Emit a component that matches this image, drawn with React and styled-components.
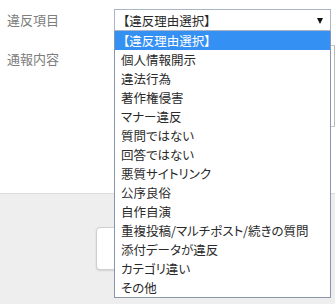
import React from "react";
import styled, { createGlobalStyle } from "styled-components";

const GlobalStyle = createGlobalStyle`
  body {
    margin: 0;
    background: #fff;
    font-family: "Noto Sans CJK JP", "Noto Sans", sans-serif;
    overflow: hidden;
  }
`;

const Page = styled.div`
  position: relative;
  width: 335px;
  height: 304px;
  overflow: hidden;
`;

const Form = styled.div`
  height: 193px;
  padding-top: 9px;
  box-sizing: border-box;
  display: flex;
  flex-direction: column;
  gap: 14px;
`;

const Row = styled.div`
  display: grid;
  grid-template-columns: 114px 1fr;
  align-items: start;
`;

const Label = styled.div`
  padding-left: 7px;
  padding-top: ${(p) => p.$top || 0}px;
  font-size: 13px;
  line-height: 22px;
  color: #7d7d7d;
`;

const SelectBox = styled.div`
  position: relative;
  width: 217px;
  height: 22px;
  box-sizing: border-box;
  border: 1px solid #a9b4c6;
  display: flex;
  align-items: center;
  padding-left: 8px;
  font-size: 12.5px;
  color: #2a2a2a;
  font-feature-settings: "palt";
`;

const Arrow = styled.span`
  position: absolute;
  right: 7px;
  top: 8px;
  width: 0;
  height: 0;
  border-left: 3.5px solid transparent;
  border-right: 3.5px solid transparent;
  border-top: 6px solid #111;
`;

const TextArea = styled.div`
  width: 221px;
  height: 82px;
  box-sizing: border-box;
  border: 1px solid #c9c9c9;
  border-right-color: #b9b9b9;
`;

const Footer = styled.div`
  height: 111px;
  background: #eeeeee;
  border-top: 1px solid #dcdcdc;
  box-sizing: border-box;
  padding: 33px 0 0 96px;
`;

const CardButton = styled.div`
  width: 143px;
  height: 43px;
  box-sizing: border-box;
  background: #fff;
  border: 1px solid #cfcfcf;
  border-radius: 4px;
  box-shadow: 0 1px 2px rgba(0, 0, 0, 0.12);
`;

const List = styled.ul`
  position: absolute;
  left: 114px;
  top: 31px;
  width: 217px;
  margin: 0;
  padding: 0;
  list-style: none;
  box-sizing: border-box;
  border: 1px solid #8796ab;
  border-top: none;
  background: #fff;
`;

const Item = styled.li`
  height: 19px;
  line-height: 19px;
  padding-left: ${(p) => (p.$selected ? 8 : 6)}px;
  font-size: 12.5px;
  white-space: nowrap;
  font-feature-settings: "palt";
  color: ${(p) => (p.$selected ? "#fff" : "#2a2a2a")};
  background: ${(p) => (p.$selected ? "#3590f3" : "transparent")};
`;

const reasons = [
  "【違反理由選択】",
  "個人情報開示",
  "違法行為",
  "著作権侵害",
  "マナー違反",
  "質問ではない",
  "回答ではない",
  "悪質サイトリンク",
  "公序良俗",
  "自作自演",
  "重複投稿/マルチポスト/続きの質問",
  "添付データが違反",
  "カテゴリ違い",
  "その他",
];

export default function App() {
  return (
    <Page>
      <GlobalStyle />
      <Form>
        <Row>
          <Label>違反項目</Label>
          <SelectBox>
            【違反理由選択】
            <Arrow />
          </SelectBox>
        </Row>
        <Row>
          <Label $top={3}>通報内容</Label>
          <TextArea />
        </Row>
      </Form>
      <Footer>
        <CardButton />
      </Footer>
      <List>
        {reasons.map((r, i) => (
          <Item key={r} $selected={i === 0}>
            {r}
          </Item>
        ))}
      </List>
    </Page>
  );
}
